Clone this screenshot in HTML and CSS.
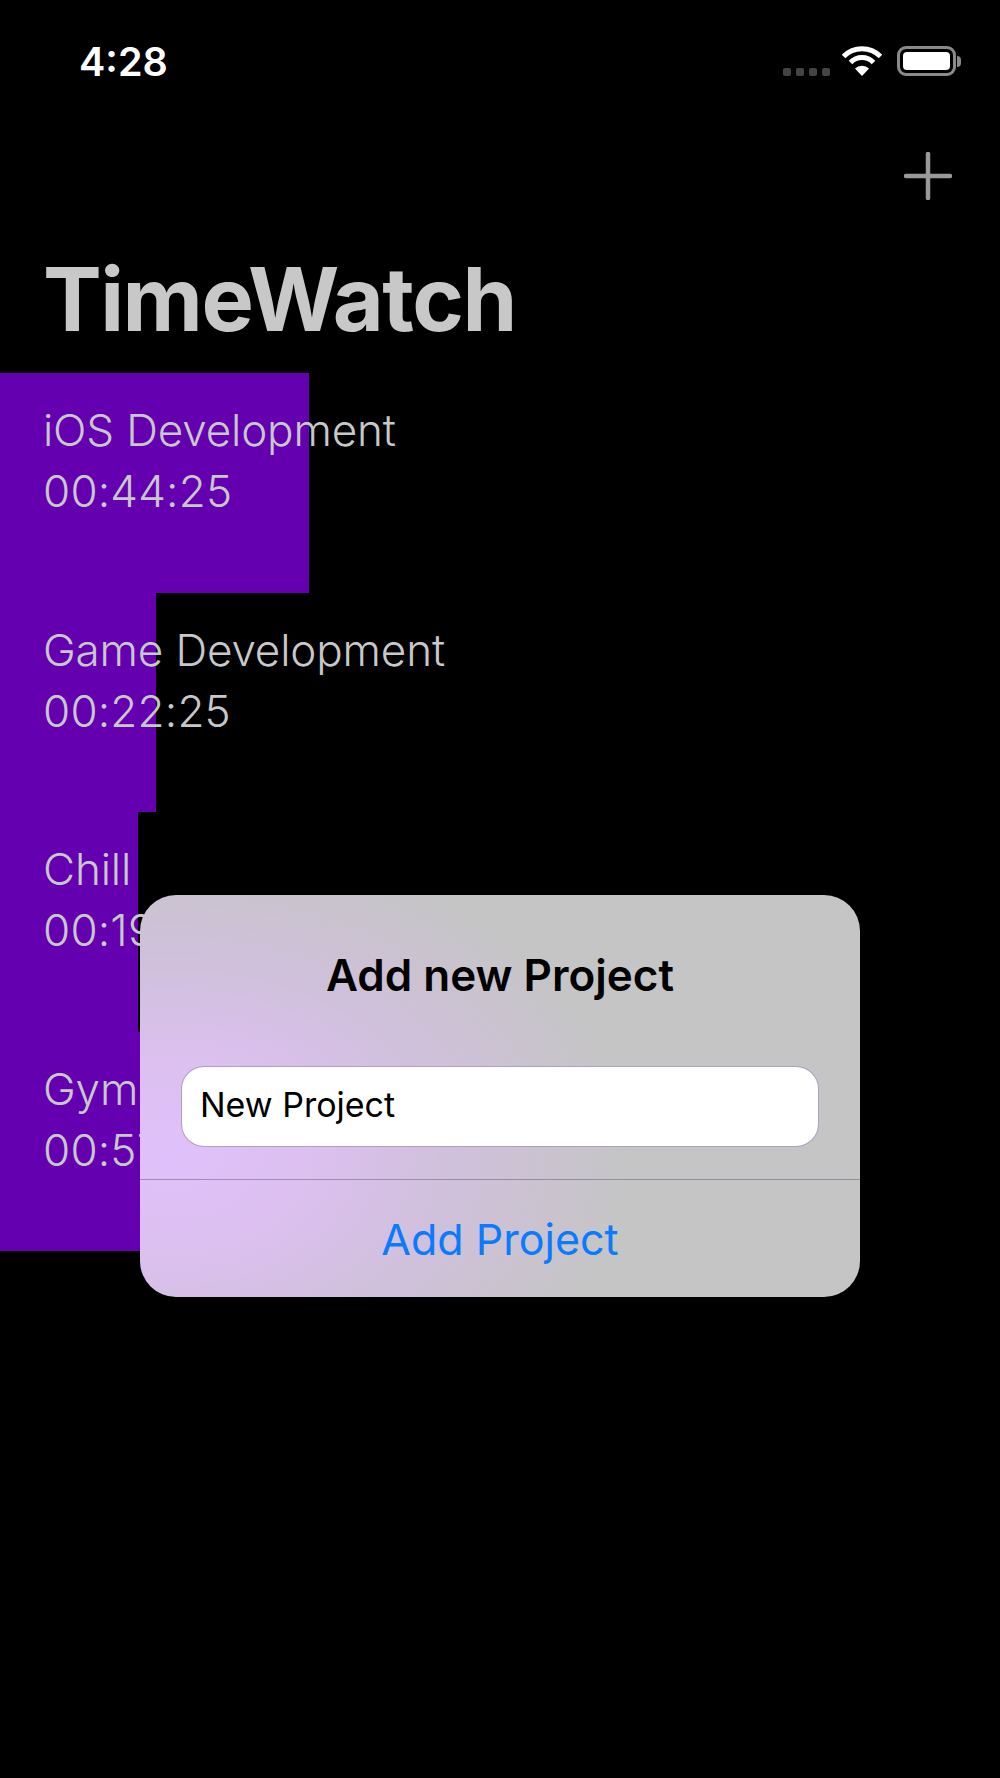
FILE: index.html
```html
<!DOCTYPE html>
<html lang="en">
<head>
    <meta charset="UTF-8">
    <meta name="viewport" content="width=device-width, initial-scale=1.0">
    <title>TimeWatch</title>
    <link rel="stylesheet" href="styles.css">
</head>
<body>
    <div id="screen">
        <div class="statusbar">
            <span class="time">4:28</span>
            <div class="status-icons">
                <div class="signal"><i></i><i></i><i></i><i></i></div>
                <svg class="wifi" width="40" height="30" viewBox="0 0 40 30">
                    <path d="M1.5 10.5 A26 26 0 0 1 38.5 10.5" fill="none" stroke="#fff" stroke-width="5"/>
                    <path d="M8.5 16.5 A16 16 0 0 1 31.5 16.5" fill="none" stroke="#fff" stroke-width="5"/>
                    <path d="M13 22.5 L20 30 L27 22.5 A10 10 0 0 0 13 22.5 Z" fill="#fff"/>
                </svg>
                <div class="battery">
                    <div class="battery-body"><div class="battery-fill"></div></div>
                    <div class="battery-nub"></div>
                </div>
            </div>
        </div>

        <div class="navbar">
            <svg class="plus" width="48" height="48" viewBox="0 0 48 48">
                <path d="M24 2 V46 M2 24 H46" stroke="#999" stroke-width="4.5" stroke-linecap="round"/>
            </svg>
        </div>

        <h1 class="title">TimeWatch</h1>

        <div class="itemList">
            <div class="items">
                <div class="bar" style="width:308.5px"></div>
                <p class="name">iOS Development</p>
                <p class="duration">00:44:25</p>
            </div>
            <div class="items">
                <div class="bar" style="width:155.5px"></div>
                <p class="name">Game Development</p>
                <p class="duration">00:22:25</p>
            </div>
            <div class="items">
                <div class="bar" style="width:138px"></div>
                <p class="name">Chill</p>
                <p class="duration">00:19:51</p>
            </div>
            <div class="items">
                <div class="bar" style="width:395px"></div>
                <p class="name">Gym</p>
                <p class="duration">00:57:05</p>
            </div>
        </div>

        <div class="dialog">
            <h2>Add new Project</h2>
            <div class="inputbox">
                <input type="text" class="input" value="New Project">
            </div>
            <button class="addbtn">Add Project</button>
        </div>
    </div>
</body>
</html>
```
FILE: styles.css
```css
*{
    box-sizing: border-box;
}
html,body{
    margin:0;
    padding:0;
    background-color:#000;
}
#screen{
    position: relative;
    width:1000px;
    height:1778px;
    overflow: hidden;
    background-color:#000;
    font-family: Inter, "Liberation Sans", sans-serif;
}

/* status bar */
.statusbar{
    display:flex;
    justify-content: space-between;
    align-items: flex-start;
    height:152px;
    padding:46px 39px 0 79px;
}
.time{
    color:#fff;
    font-size:39.5px;
    font-weight:600;
    line-height:32px;
}
.status-icons{
    display:flex;
    align-items: flex-end;
    height:30px;
}
.signal{
    display:flex;
    gap:5px;
    margin-right:12px;
}
.signal i{
    display:block;
    width:8px;
    height:8px;
    border-radius:2px;
    background-color:#444;
}
.wifi{
    display:block;
    margin-right:15px;
}
.battery{
    display:flex;
    align-items: center;
}
.battery-body{
    width:59px;
    height:30px;
    padding:3px;
    border:3px solid #8a8a8a;
    border-radius:9px;
}
.battery-fill{
    width:100%;
    height:100%;
    background-color:#fff;
    border-radius:4px;
}
.battery-nub{
    width:4px;
    height:11px;
    margin-left:1px;
    background-color:#8a8a8a;
    border-radius:0 4px 4px 0;
}

/* nav */
.navbar{
    display:flex;
    justify-content: flex-end;
    height:48px;
    padding-right:48px;
}
.plus{
    display:block;
}

.title{
    margin:46px 0 0 43px;
    height:127px;
    font-size:88px;
    font-weight:700;
    line-height:106px;
    color:#c8c8c8;
    letter-spacing:-1.5px;
}

/* list */
.items{
    position: relative;
    height:219.5px;
    padding:27px 0 0 43px;
}
.bar{
    position: absolute;
    left:0;
    top:0;
    bottom:0;
    background-color:#6400b0;
}
.items p{
    position: relative;
    margin:0;
    font-size:44px;
    font-weight:350;
    line-height:60px;
    color:#c8c8c8;
}
.name{
    letter-spacing:-0.15px;
}
.items .duration{
    margin-top:1px;
    letter-spacing:0.2px;
}

/* dialog */
.dialog{
    position: absolute;
    left:140px;
    top:895px;
    width:720px;
    height:402px;
    border-radius:36px;
    overflow: hidden;
    display:flex;
    flex-direction: column;
    align-items: center;
    background-color:#c5c5c5;
    background-image: radial-gradient(ellipse 460px 320px at 30px 260px, #e0c0fa 0%, #dcc0f0 30%, #d0c0dc 60%, #c5c5c5 100%);
}
.dialog h2{
    margin:57px 0 0 0;
    height:61px;
    font-size:44px;
    font-weight:600;
    line-height:46px;
    color:#000;
}
.inputbox{
    width:100%;
    padding:53px 41px 32px 41px;
    border-bottom:1px solid rgba(90,70,110,0.45);
}
.input{
    display:block;
    width:100%;
    height:81px;
    padding:0 18px 4px 18px;
    border:1px solid rgba(110,80,140,0.55);
    border-radius:23px;
    background-color:#fff;
    font-family: Inter, "Liberation Sans", sans-serif;
    font-size:34px;
    color:#000;
    outline:none;
}
.addbtn{
    flex:1;
    width:100%;
    border:none;
    background:none;
    padding:0;
    font-family: Inter, "Liberation Sans", sans-serif;
    font-size:43px;
    font-weight:400;
    color:#0a7aff;
}
```
